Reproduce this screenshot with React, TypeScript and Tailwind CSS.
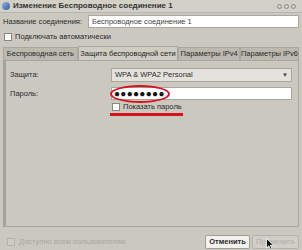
import React from "react";

function Check({ disabled = false, checked = false }: { disabled?: boolean; checked?: boolean }) {
  return (
    <span
      className={`inline-block shrink-0 w-[8px] h-[8px] border ${
        disabled ? "border-[#b5b2aa] bg-[#cfccc4]" : "border-[#8a877f] bg-white"
      } ${checked ? "bg-[#e8c060]" : ""}`}
    />
  );
}

export default function App() {
  return (
    <div
      className="relative w-[302px] h-[250px] overflow-hidden bg-[#cbc8c0] text-[#2a2a2a] text-[7.5px] leading-none whitespace-nowrap"
      style={{ fontFamily: '"Liberation Sans", Arial, sans-serif' }}
    >
      {/* TITLE BAR */}
      <div className="h-[13px] flex items-center justify-between pl-[2px] pr-[6px] bg-[#d3d0c8] border-b border-[#b8b5ad]">
        <div className="flex items-center gap-[3px]">
          <span className="w-[8px] h-[8px] rounded-full bg-gradient-to-br from-[#8fb6e0] to-[#2d5f9a]" />
          <span className="font-bold text-[8px] text-[#333]">Изменение Беспроводное соединение 1</span>
        </div>
        <div className="flex gap-[2px]">
          <span className="w-[5px] h-[5px] rounded-full border border-[#8a877f]" />
          <span className="w-[5px] h-[5px] rounded-full border border-[#8a877f]" />
          <span className="w-[5px] h-[5px] rounded-full border border-[#8a877f]" />
        </div>
      </div>

      <div className="px-[3px]">
        {/* NAME */}
        <div className="flex items-center justify-between mt-[2px] h-[13px]">
          <span>Название соединения:</span>
          <div className="w-[211px] h-[13px] bg-white border border-[#a9a69e] flex items-center px-[3px] text-[#444]">
            Беспроводное соединение 1
          </div>
        </div>

        {/* AUTO */}
        <div className="flex items-center gap-[3px] mt-[4px] h-[9px] pl-[1px]">
          <Check checked />
          <span>Подключать автоматически</span>
        </div>

        {/* TABS */}
        <div className="flex mt-[5px] h-[14px] items-end">
          <div className="h-[13px] w-[75px] flex items-center justify-center bg-[#bcb9b1] border border-[#a9a69e] border-b-0">
            Беспроводная сеть
          </div>
          <div className="h-[14px] w-[101px] flex items-center justify-center bg-[#cfccc4] border border-[#a9a69e] border-b-0 text-[#222]">
            Защита беспроводной сети
          </div>
          <div className="h-[13px] w-[62px] flex items-center justify-center bg-[#bcb9b1] border border-[#a9a69e] border-b-0">
            Параметры IPv4
          </div>
          <div className="h-[13px] w-[59px] flex items-center justify-center bg-[#bcb9b1] border border-[#a9a69e] border-b-0">
            Параметры IPv6
          </div>
        </div>

        {/* PANEL */}
        <div className="h-[167px] bg-[#cbc8c0] border border-[#a9a69e] border-l-[3px] border-l-[#a5a29a] pt-[7px] pl-[4px] pr-[6px]">
          <div className="flex items-center h-[14px]">
            <span className="w-[101px]">Защита:</span>
            <div className="flex-1 h-[14px] bg-[#e4e2dc] border border-[#a9a69e] flex items-center justify-between px-[3px]">
              <span>WPA &amp; WPA2 Personal</span>
              <span className="text-[6px] text-[#444]">▼</span>
            </div>
          </div>

          <div className="flex items-center h-[13px] mt-[5px]">
            <span className="w-[101px]">Пароль:</span>
            <div className="relative flex-1 h-[13px] bg-white border border-[#a9a69e] flex items-center px-[2px]">
              <span className="text-[10px] tracking-[0.3px] text-[#111]">●●●●●●●●</span>
              <span className="absolute left-[-2px] top-[-3px] w-[60px] h-[18px] rounded-[50%] border-2 border-[#d8121c]" />
            </div>
          </div>

          <div className="ml-[100px] mt-[2px] w-[73px] border-b-[3px] border-[#d8121c] pb-[2px]">
            <div className="flex items-center gap-[3px] pl-[2px] h-[9px]">
              <Check />
              <span>Показать пароль</span>
            </div>
          </div>
        </div>

        {/* BOTTOM */}
        <div className="flex items-center justify-between mt-[8px] h-[14px]">
          <div className="flex items-center gap-[4px] pl-[4px] text-[#aaa79f]">
            <Check disabled />
            <span>Доступно всем пользователям</span>
          </div>
          <div className="flex gap-[2px]">
            <div className="w-[45px] h-[14px] flex items-center justify-center bg-[#f2f1ee] border border-[#a09d95] rounded-[2px] font-bold">
              Отменить
            </div>
            <div className="w-[47px] h-[14px] flex items-center justify-center bg-[#d1cec7] border border-[#b5b2aa] rounded-[2px] text-[#b0ada5]">
              Применить
            </div>
          </div>
        </div>
      </div>

      {/* CURSOR */}
      <svg className="absolute left-[266px] top-[238px]" width="8" height="12" viewBox="0 0 8 12">
        <path d="M0.5 0.5 L0.5 10 L2.8 7.8 L4.5 11.5 L6 10.8 L4.3 7.2 L7.5 7.2 Z" fill="#111" stroke="#fff" strokeWidth="0.8" />
      </svg>
    </div>
  );
}
